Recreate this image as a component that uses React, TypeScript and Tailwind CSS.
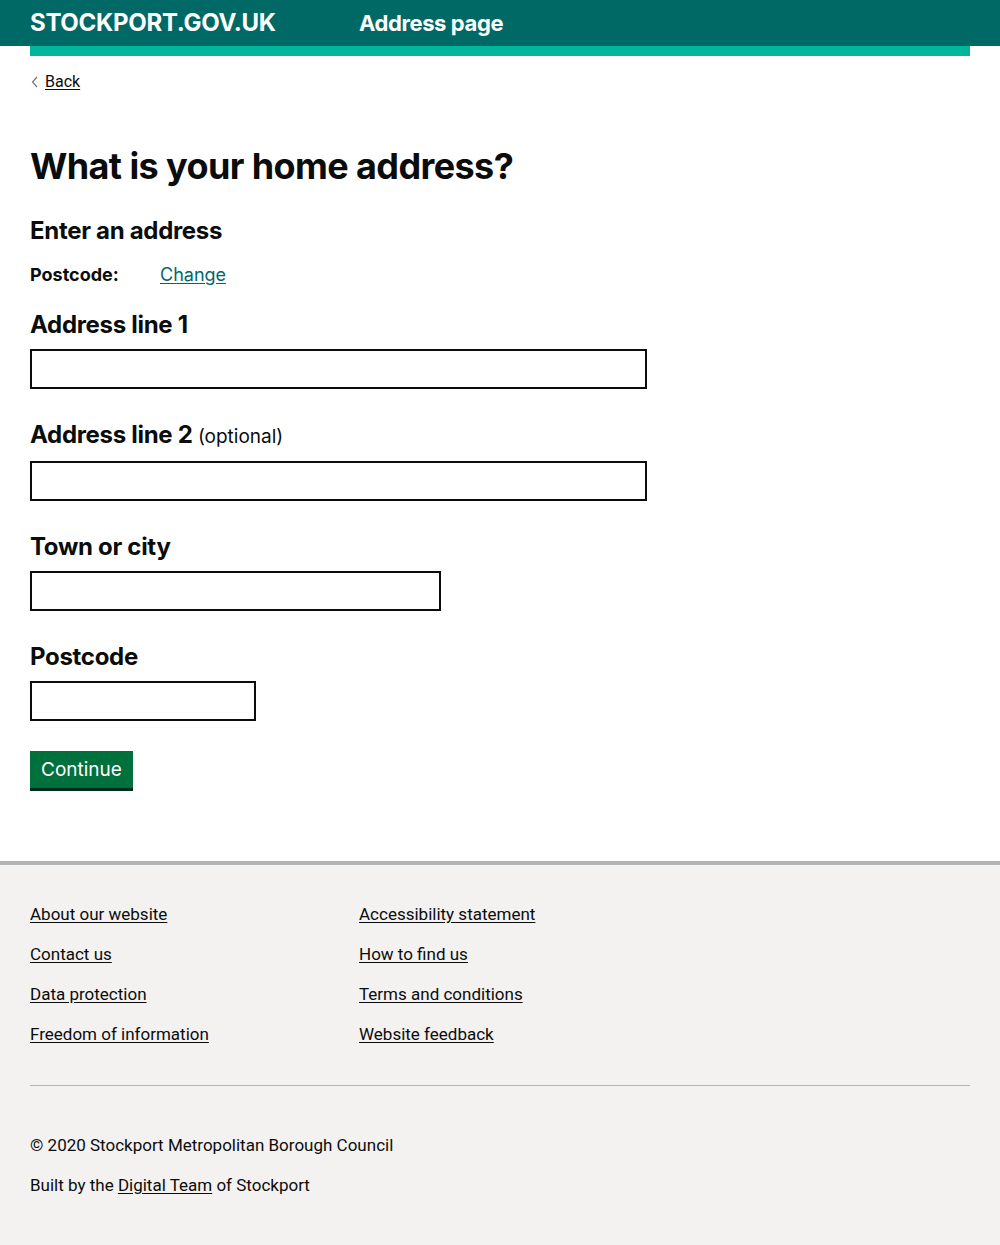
import React from "react";

const font = { fontFamily: "Inter, 'Noto Sans', sans-serif" };

function Field({ label, optional, width, last }: { label: string; optional?: boolean; width: string; last?: boolean }) {
  return (
    <div className={last ? "mb-[30px]" : "mb-[31px]"}>
      <label className="block text-[24px] font-bold leading-[30px] text-[#0b0c0c] mb-[9px] tracking-[-0.3px]">
        {label}
        {optional && <span className="text-[19px] font-normal tracking-normal"> (optional)</span>}
      </label>
      <input className={`block h-[40px] border-2 border-[#0b0c0c] bg-white ${width}`} />
    </div>
  );
}

const footerLinks = [
  ["About our website", "Accessibility statement"],
  ["Contact us", "How to find us"],
  ["Data protection", "Terms and conditions"],
  ["Freedom of information", "Website feedback"],
];

export default function App() {
  return (
    <div className="min-h-[1245px] flex flex-col bg-white text-[#0b0c0c]" style={font}>
      <header className="bg-[#006966]">
        <div className="h-[46px] px-[30px] flex items-center text-white font-bold">
          <span className="text-[24px] w-[329px] tracking-[-0.3px]">STOCKPORT.GOV.UK</span>
          <span className="text-[22px] tracking-[-0.4px]">Address page</span>
        </div>
      </header>
      <div className="mx-[30px] h-[10px] bg-[#00b69a]" />
      <main className="px-[30px] pt-[14px] pb-[73px] flex-none">
        <a href="#" className="inline-flex items-center text-[16px] leading-[22px] text-[#0b0c0c]" style={{ fontFamily: "Roboto, sans-serif" }}>
          <svg width="8" height="12" viewBox="0 0 8 12" className="mr-[6px] ml-[1px]">
            <path d="M6 1 L1.5 6 L6 11" fill="none" stroke="#6f777b" strokeWidth="1.2" />
          </svg>
          <span className="underline underline-offset-2">Back</span>
        </a>
        <h1 className="mt-[50px] text-[36px] font-bold leading-[44px] tracking-[-0.6px]">What is your home address?</h1>
        <h2 className="mt-[28px] text-[24px] font-bold leading-[30px] tracking-[-0.3px]">Enter an address</h2>
        <div className="mt-[14px] flex items-center text-[18px] leading-[30px]">
          <span className="font-bold w-[130px]">Postcode:</span>
          <a href="#" className="text-[#00676a] underline underline-offset-2">Change</a>
        </div>
        <div className="mt-[20px]">
          <Field label="Address line 1" width="w-[617px]" />
          <Field label="Address line 2" optional width="w-[617px]" />
          <Field label="Town or city" width="w-[411px]" />
          <Field label="Postcode" width="w-[226px]" last />
        </div>
        <button className="h-[37px] px-[11px] bg-[#00703c] text-white text-[19px] leading-[37px] shadow-[0_3px_0_#002d18]">
          Continue
        </button>
      </main>
      <footer className="flex-1 bg-[#f3f2f1] border-t-4 border-[#b1b4b6] px-[30px] pt-[38px] pb-[40px]" style={{ fontFamily: "Roboto, sans-serif" }}>
        <div className="flex flex-col gap-[18px]">
          {footerLinks.map(([a, b]) => (
            <div key={a} className="flex text-[17px] leading-[22px] text-[#0b0c0c]">
              <a href="#" className="w-[329px] underline underline-offset-2">
                <span>{a}</span>
              </a>
              <a href="#" className="underline underline-offset-2">{b}</a>
            </div>
          ))}
        </div>
        <hr className="mt-[40px] border-0 border-t border-[#b1b4b6]" />
        <p className="mt-[48px] text-[17px] leading-[22px]">© 2020 Stockport Metropolitan Borough Council</p>
        <p className="mt-[18px] text-[17px] leading-[22px]">
          Built by the <a href="#" className="underline underline-offset-2">Digital Team</a> of Stockport
        </p>
      </footer>
    </div>
  );
}
